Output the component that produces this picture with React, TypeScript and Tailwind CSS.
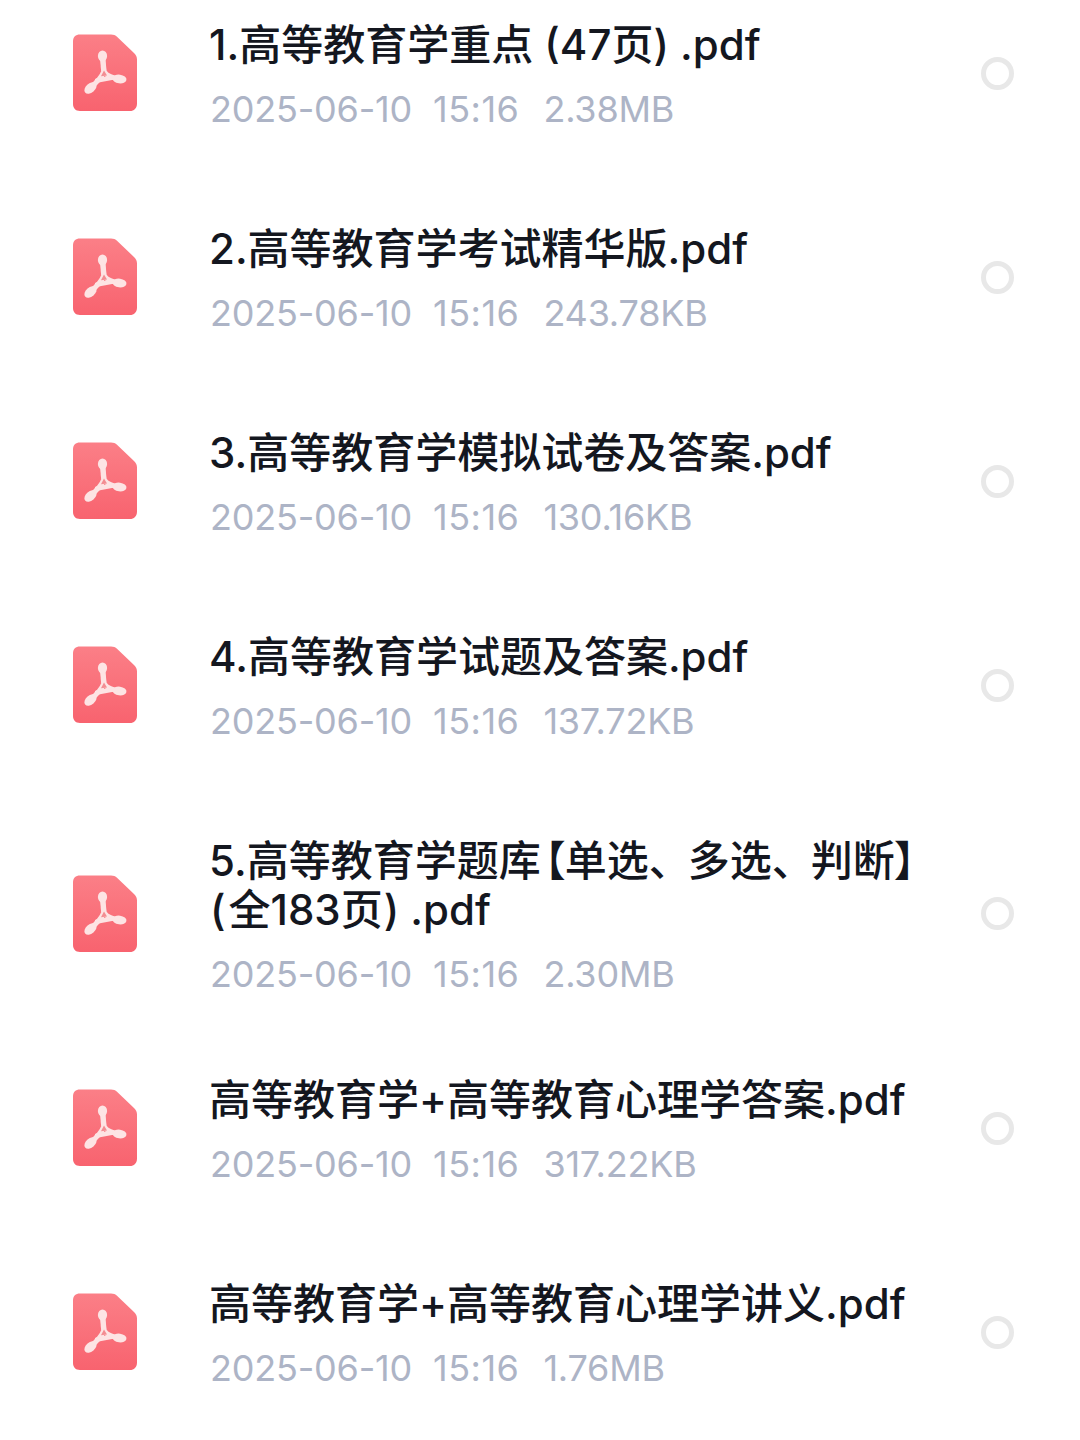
import React from 'react';

const files = [
  { name: '1.高等教育学重点 (47页) .pdf', size: '2.38MB' },
  { name: '2.高等教育学考试精华版.pdf', size: '243.78KB' },
  { name: '3.高等教育学模拟试卷及答案.pdf', size: '130.16KB' },
  { name: '4.高等教育学试题及答案.pdf', size: '137.72KB' },
  {
    name: (
      <>
        5.高等教育学题库<span className="ml-[3px] [font-feature-settings:'palt']">【</span>单选<span className="tracking-[-3px]">、</span>多选<span className="tracking-[-3px]">、</span>判断<span className="[font-feature-settings:'palt']">】</span>
        <br />
        <span className="ml-[1px] mr-[3px]">(</span>全183页<span className="ml-[1px]">)</span> .pdf
      </>
    ),
    size: '2.30MB',
    tall: true,
  },
  { name: '高等教育学+高等教育心理学答案.pdf', size: '317.22KB' },
  { name: '高等教育学+高等教育心理学讲义.pdf', size: '1.76MB' },
];

const PdfIcon = () => (
  <svg width="66" height="78" viewBox="0 0 66 78" className="shrink-0 blur-[0.4px]">
    <defs>
      <linearGradient id="pdf-bg" x1="0" y1="0" x2="0" y2="1">
        <stop offset="0" stopColor="#fb7f87" />
        <stop offset="1" stopColor="#f8636f" />
      </linearGradient>
    </defs>
    <path d="M8 0.5H39C41.5 0.5 43.5 1.3 45 2.8L62 19C64 21 65 23 65 25.4V69.5C65 74.4 62 77 58 77H8C3.6 77 1 74.2 1 70V7.5C1 3 3.6 0.5 8 0.5Z" fill="url(#pdf-bg)" />
    <g fill="none" stroke="#fde4e4" strokeLinecap="round" strokeLinejoin="round">
      <path d="M30.5 22C30.5 30 33 33 31.5 38C29.5 44 24 49 18 54" strokeWidth="5" />
      <path d="M30.5 22C32 30 30 34 32.5 38C35 42 41 44 48 45" strokeWidth="5" />
      <path d="M25 46.5L41 43.5" strokeWidth="4.5" />
    </g>
    <ellipse cx="30.5" cy="22" rx="4.6" ry="5.6" fill="#fde4e4" />
    <ellipse cx="18.5" cy="54" rx="7" ry="4.6" transform="rotate(-40 18.5 54)" fill="#fde4e4" />
    <ellipse cx="47.5" cy="45" rx="7" ry="4.4" transform="rotate(8 47.5 45)" fill="#fde4e4" />
    <path d="M32 36.5L35 41.5L29 42.2Z" fill="#f38d92" />
  </svg>
);

export default function App() {
  return (
    <div className="w-[1080px] h-[1440px] overflow-hidden bg-white pt-[20px] font-['Inter','Noto_Sans_CJK_SC',sans-serif]">
      {files.map((file, i) => (
        <div
          key={i}
          className={`flex items-center pl-[72px] pr-[66px] ${file.tall ? 'mb-[84px]' : 'mb-[98px]'}`}
        >
          <PdfIcon />
          <div className="ml-[71px] w-[726px]">
            <div className="text-[42px] leading-[49px] font-medium text-[#14171f] whitespace-nowrap">
              {file.name}
            </div>
            <div className="mt-[24px] mb-[1px] ml-[1px] flex text-[36px] leading-[32px] text-[#adb4c6] tracking-[-0.2px]">
              <span>2025-06-10</span>
              <span className="ml-[21px] tracking-[0.5px]">15:16</span>
              <span className="ml-[24px]">{file.size}</span>
            </div>
          </div>
          <div className="ml-auto w-[33px] h-[33px] rounded-full border-[5px] border-[#e8e8e8]" />
        </div>
      ))}
    </div>
  );
}
